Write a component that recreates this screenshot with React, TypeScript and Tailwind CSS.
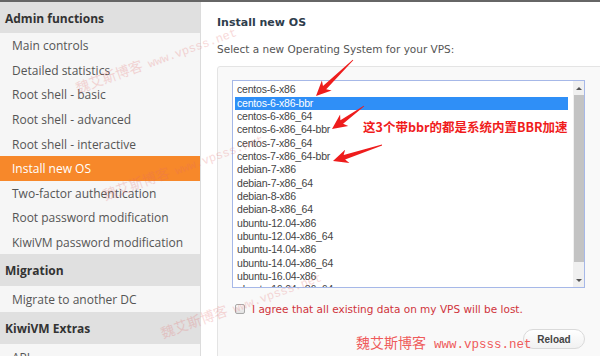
import { JSX } from "react";

const adminItems = [
  "Main controls",
  "Detailed statistics",
  "Root shell - basic",
  "Root shell - advanced",
  "Root shell - interactive",
  "Install new OS",
  "Two-factor authentication",
  "Root password modification",
  "KiwiVM password modification",
];

const osList = [
  "centos-6-x86",
  "centos-6-x86-bbr",
  "centos-6-x86_64",
  "centos-6-x86_64-bbr",
  "centos-7-x86_64",
  "centos-7-x86_64-bbr",
  "debian-7-x86",
  "debian-7-x86_64",
  "debian-8-x86",
  "debian-8-x86_64",
  "ubuntu-12.04-x86",
  "ubuntu-12.04-x86_64",
  "ubuntu-14.04-x86",
  "ubuntu-14.04-x86_64",
  "ubuntu-16.04-x86",
  "ubuntu-16.04-x86_64",
];

// red brush-style arrow, tail -> tip
function arrow(tx: number, ty: number, px: number, py: number): string {
  const len = Math.hypot(px - tx, py - ty);
  const dx = (px - tx) / len;
  const dy = (py - ty) / len;
  const nx = -dy;
  const ny = dx;
  const bx = px - dx * 12;
  const by = py - dy * 12;
  const wx = bx - dx * 3;
  const wy = by - dy * 3;
  const pts = [
    [tx + nx * 0.4, ty + ny * 0.4],
    [bx + nx * 2.3, by + ny * 2.3],
    [wx + nx * 7, wy + ny * 7],
    [px, py],
    [wx - nx * 7, wy - ny * 7],
    [bx - nx * 2.3, by - ny * 2.3],
    [tx - nx * 0.4, ty - ny * 0.4],
  ];
  return pts.map((p) => p.join(",")).join(" ");
}

function SideHeader({ title, h }: { title: string; h: string }) {
  return (
    <div className={`${h} flex items-center bg-[#e0e0e0] pl-[5px] pt-[2px] text-[12px] font-bold text-[#333]`}>
      {title}
    </div>
  );
}

function SideItem({ label, active }: { label: string; active?: boolean }) {
  return (
    <div
      className={`flex h-[24.6px] items-center pl-[12px] pt-[2px] text-[12px] ${
        active ? "bg-[#f7882a] text-white" : "text-[#555]"
      }`}
    >
      {label}
    </div>
  );
}

function Watermark({ className }: { className: string }) {
  return (
    <div className={`absolute origin-left rotate-[-20deg] whitespace-nowrap text-[#e46a6a] opacity-25 ${className}`}>
      <span className="text-[14px] [font-family:'Noto_Sans_CJK_SC',sans-serif]">魏艾斯博客</span>
      <span className="ml-[6px] text-[12px] [font-family:'Liberation_Mono',monospace]">www.vpsss.net</span>
    </div>
  );
}

export default function App(): JSX.Element {
  return (
    <div className="relative h-[356px] w-[600px] overflow-hidden border-t-2 border-[#666] bg-white">
      <div className="flex h-full">
        {/* sidebar */}
        <aside className="w-[201px] shrink-0 border-r border-[#dcdcdc] bg-[#f6f6f6] [font-family:'Open_Sans',sans-serif]">
          <SideHeader title="Admin functions" h="h-[31px]" />
          {adminItems.map((it) => (
            <SideItem key={it} label={it} active={it === "Install new OS"} />
          ))}
          <SideHeader title="Migration" h="h-[32px]" />
          <div className="flex h-[26px] items-center pl-[12px] pt-[2px] text-[12px] text-[#555]">Migrate to another DC</div>
          <SideHeader title="KiwiVM Extras" h="h-[32px]" />
          <SideItem label="API" />
        </aside>

        {/* main */}
        <main className="flex-1 overflow-hidden pl-[16px] pt-[13px] [font-family:'DejaVu_Sans',sans-serif]">
          <h2 className="text-[11px] font-bold leading-[16px] text-[#2e3d4c]">Install new OS</h2>
          <p className="mt-[11px] text-[10.5px] leading-[14px] text-[#555]">Select a new Operating System for your VPS:</p>

          <div className="mt-[10px] h-[300px] w-[400px] rounded-[3px] border border-[#e4e4e4] bg-[#f9f9f9] pl-[14px] pt-[13px]">
            <div className="flex h-[208px] w-[353px] border border-[#a6b8e8] bg-white">
              <ul className="flex-1 overflow-hidden pl-[2px] pr-[5px] pt-[2.3px] [font-family:'Liberation_Sans',sans-serif] text-[10.5px] tracking-[-0.2px] text-[#444]">
                {osList.map((os) => (
                  <li
                    key={os}
                    className={`h-[13.35px] pl-[2px] leading-[13.35px] ${
                      os === "centos-6-x86-bbr" ? "bg-[#2f8ff7] text-white" : ""
                    }`}
                  >
                    {os}
                  </li>
                ))}
              </ul>
              <div className="flex w-[11px] flex-col bg-[#f0f0f0]">
                <div className="flex h-[14px] items-center justify-center">
                  <div className="h-0 w-0 border-x-[3px] border-b-[3px] border-x-transparent border-b-[#555]" />
                </div>
                <div className="mx-[0.5px] h-[167px] bg-[#c3c3c3]" />
                <div className="flex-1" />
                <div className="flex h-[14px] items-center justify-center">
                  <div className="h-0 w-0 border-x-[3px] border-t-[3px] border-x-transparent border-t-[#555]" />
                </div>
              </div>
            </div>

            <label className="mt-[15px] flex items-center gap-[7px] pl-[3px]">
              <span className="h-[10px] w-[10px] rounded-[2px] border border-[#a9a9a9] bg-gradient-to-b from-[#fafafa] to-[#e2e2e2]" />
              <span className="text-[10.5px] leading-[12px] text-[#d0343c]">
                I agree that all existing data on my VPS will be lost.
              </span>
            </label>

            <div className="mt-[14px] flex w-[353px] justify-end">
              <button className="h-[20px] w-[62px] rounded-full border border-[#dadada] bg-gradient-to-b from-white to-[#f1f1f1] text-[10px] font-bold text-[#444] [font-family:'Liberation_Sans',sans-serif]">
                Reload
              </button>
            </div>
          </div>
        </main>
      </div>

      {/* faint watermarks */}
      <Watermark className="left-[76px] top-[74px]" />
      <Watermark className="left-[103px] top-[181px]" />
      <Watermark className="left-[161px] top-[319px]" />

      {/* annotation */}
      <div className="absolute left-[363px] top-[116px] whitespace-nowrap text-[12.5px] font-semibold leading-[18px] text-[#f01c1c] [font-family:'Noto_Sans_CJK_SC',sans-serif]">
        这3个带bbr的都是系统内置BBR加速
      </div>

      <svg className="pointer-events-none absolute left-0 top-0" width="600" height="356">
        <polygon points={arrow(353, 58, 316, 94)} fill="#ee1c1c" />
        <polygon points={arrow(364, 104, 332, 127)} fill="#ee1c1c" />
        <polygon points={arrow(382, 143, 333, 159)} fill="#ee1c1c" />
      </svg>

      <div className="absolute left-[356px] top-[328px] whitespace-nowrap text-[#ef5b5b]">
        <span className="text-[14px] [font-family:'Noto_Sans_CJK_SC',sans-serif]">魏艾斯博客</span>
        <span className="ml-[8px] text-[12.5px] [font-family:'Liberation_Mono',monospace]">www.vpsss.net</span>
      </div>
    </div>
  );
}
